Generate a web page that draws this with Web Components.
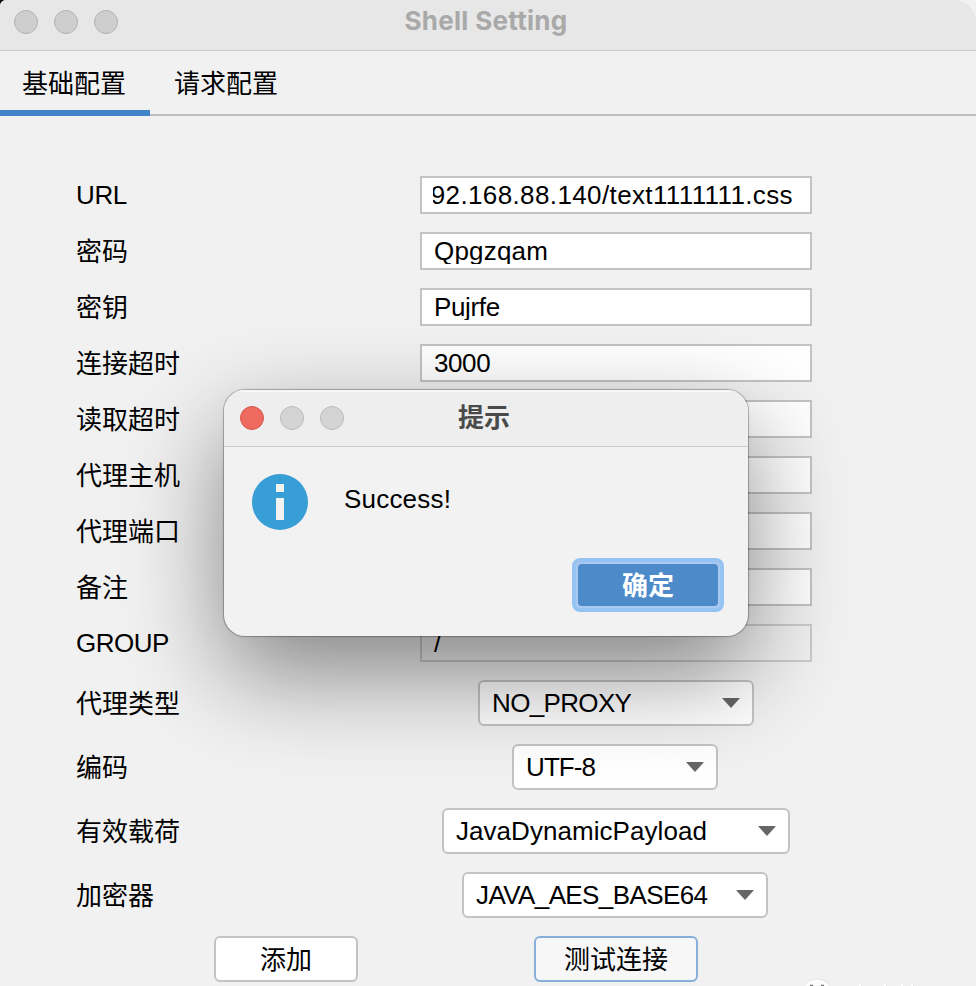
<!DOCTYPE html>
<html lang="zh-CN">
<head>
<meta charset="utf-8">
<title>Shell Setting</title>
<style>
html,body{margin:0;height:986px;overflow:hidden;background:#000}
body{font-family:"Liberation Sans","Noto Sans CJK SC",sans-serif;font-size:26px;color:#000}
</style>
</head>
<body>
<setting-window></setting-window>
<script>
const define=(name,css,html)=>customElements.define(name,class extends HTMLElement{
  constructor(){
    super();
    this.attachShadow({mode:'open'}).innerHTML=`<style>*{box-sizing:border-box}${css}</style>${html}`;
  }
});

define('traffic-lights',`
:host{display:flex;gap:16px}
i{width:24px;height:24px;border-radius:50%;background:var(--light,#cecece);border:1px solid #b3b3b3}
:host([active]) i{--light:#d4d4d4;border-color:#bcbcbc}
:host([active]) i:first-of-type{--light:#ee6a5f;border-color:#d5554b}
`,`<i></i><i></i><i></i>`);

define('tab-item',`
:host{display:block;box-sizing:border-box;height:65px;padding:0 24px 0 22px;line-height:66px;white-space:nowrap;border-bottom:2px solid #bebebe}
:host([selected]){width:150px;border-bottom:6px solid #4083c9}
`,`<slot></slot>`);

define('form-row',`
:host{display:grid;grid-template-columns:344px 392px;align-items:center;height:56px;margin-left:76px}
:host([tall]){height:64px}
.label{letter-spacing:var(--ls,0);line-height:38px;padding-top:2px;white-space:nowrap}
:host([latin]) .label{padding-top:0}
.control{display:flex;justify-content:center}
`,`<div class="label"><slot name="label"></slot></div><div class="control"><slot></slot></div>`);

define('text-field',`
:host{display:block;box-sizing:border-box;width:392px;height:38px;border:2px solid #c3c3c3;background:#fff;padding:4px 12px 4px 11px}
:host([disabled]){background:#f1f1f1;border-color:#cbcbcb}
div{height:26px;overflow:hidden;display:flex;line-height:26px;padding-left:1px;white-space:nowrap;letter-spacing:var(--ls,0)}
:host([scrolled]) div{justify-content:flex-end;padding:0 5px 0 0}
`,`<div><slot></slot></div>`);

define('combo-box',`
:host{display:flex;box-sizing:border-box;height:46px;border:2px solid #c3c3c3;border-radius:6px;background:#fff;padding:0 12px;align-items:center;justify-content:space-between;white-space:nowrap}
span{letter-spacing:var(--ls,0);line-height:42px}
svg{display:block;width:18px;height:10px;flex:none}
`,`<span><slot></slot></span><svg viewBox="0 0 18 10"><path d="M0 0H18L9 10Z" fill="#666"/></svg>`);

define('push-button',`
:host{display:block;box-sizing:border-box;height:46px;border:2px solid #c3c3c3;border-radius:6px;background:#fff;text-align:center;line-height:44px;white-space:nowrap}
:host([focused]){border-color:#87afda;background:#f7f7f7}
:host([primary]){width:152px;height:54px;border:4px solid #97c3f3;border-radius:8px;background:#a9c9f0;padding:2px;line-height:44px;color:#fff;font-weight:700}
:host([primary]) div{background:#4c8aca;border-radius:4px;height:42px}
`,`<div><slot></slot></div>`);

define('message-dialog',`
:host{display:block;box-sizing:border-box;width:524px;height:246px;border-radius:21px;background:#f2f2f2;overflow:hidden;
box-shadow:0 0 0 1px rgba(0,0,0,.2),0 0 3px rgba(0,0,0,.2),0 37px 98px rgba(0,0,0,.46)}
header{height:57px;background:#eee;border-bottom:1px solid #cbcbcb;box-shadow:inset 0 2px #f7f7f7;display:grid;grid-template-columns:104px 1fr 108px;padding-right:0;padding-left:16px;align-items:center;text-align:center;font-weight:700;color:#4a4a4a;line-height:54px}
header{grid-template-columns:104px 1fr 124px}
.body{display:flex;padding:27px 28px 0;gap:36px;height:111px}
svg{width:56px;height:56px;display:block}
.msg{line-height:50px;letter-spacing:.2px}
footer{display:flex;justify-content:flex-end;padding-right:24px}
`,`<header><traffic-lights active></traffic-lights><div><slot name="title"></slot></div></header>
<div class="body"><svg viewBox="0 0 56 56"><circle cx="28" cy="28" r="28" fill="#389fd6"/><path d="M24 10h8v8h-8zM24 24h8v22h-8z" fill="#f2f2f2"/></svg><div class="msg"><slot></slot></div></div>
<footer><slot name="action"></slot></footer>`);

define('corner-mark',`:host{display:block;width:130px;height:8px}svg{display:block}`,
`<svg width="130" height="8" viewBox="0 0 130 8"><circle cx="17" cy="16" r="15" fill="#fdfdfd" stroke="#ddd" stroke-width=".7"/><path d="M10 7.5h3M21 7.5h3" stroke="#777" stroke-width="1.4"/><path d="M59 7h3M84 7h3M101 7h2M111 7h3" stroke="#fff" stroke-width="2"/><path d="M61 7h1M86 7h1M113 7h1" stroke="#ccc" stroke-width="1"/></svg>`);

define('setting-window',`
:host{display:block;position:relative;width:976px;height:986px;background:#f1f1f1;overflow:hidden;border-radius:6px 0 0 0}
.titlebar{height:51px;background:#e7e7e7;border-bottom:1px solid #c8c8c8;display:grid;grid-template-columns:104px 1fr 122px;padding:0 0 6px 14px;align-items:center;text-align:center;font:700 26px/38px Inter,sans-serif;color:#a9a9a9;border-radius:0 22px 0 0}
.titlebar div{letter-spacing:.3px;padding-bottom:2px}
nav{display:flex;height:65px;align-items:flex-start}
nav tab-item:last-of-type{flex:1;padding-left:24px}
.form{padding-top:51px}
.buttons{display:flex;padding:9px 0 0 214px;gap:176px}
message-dialog{position:absolute;left:224px;top:390px}
corner-mark{position:absolute;left:800px;top:978px}
`,`
<div class="titlebar"><traffic-lights></traffic-lights><div>Shell Setting</div></div>
<nav><tab-item selected>基础配置</tab-item><tab-item>请求配置</tab-item></nav>
<div class="form">
<form-row latin style="--ls:-.4px"><span slot="label">URL</span><text-field scrolled style="--ls:.38px">http://192.168.88.140/text1111111.css</text-field></form-row>
<form-row><span slot="label">密码</span><text-field style="--ls:.2px">Qpgzqam</text-field></form-row>
<form-row><span slot="label">密钥</span><text-field style="--ls:-.35px">Pujrfe</text-field></form-row>
<form-row><span slot="label">连接超时</span><text-field style="--ls:-.4px">3000</text-field></form-row>
<form-row><span slot="label">读取超时</span><text-field></text-field></form-row>
<form-row><span slot="label">代理主机</span><text-field></text-field></form-row>
<form-row><span slot="label">代理端口</span><text-field></text-field></form-row>
<form-row><span slot="label">备注</span><text-field></text-field></form-row>
<form-row latin style="--ls:-.5px"><span slot="label">GROUP</span><text-field disabled>/</text-field></form-row>
<div class="combos">
<form-row tall><span slot="label">代理类型</span><combo-box style="width:276px;--ls:-.65px">NO_PROXY</combo-box></form-row>
<form-row tall><span slot="label">编码</span><combo-box style="width:206px;margin-right:2px;--ls:-.9px">UTF-8</combo-box></form-row>
<form-row tall><span slot="label">有效载荷</span><combo-box style="width:348px;--ls:.05px">JavaDynamicPayload</combo-box></form-row>
<form-row tall><span slot="label">加密器</span><combo-box style="width:306px;margin-right:2px;--ls:-.6px">JAVA_AES_BASE64</combo-box></form-row>
</div>
<div class="buttons"><push-button style="width:144px">添加</push-button><push-button focused style="width:164px">测试连接</push-button></div>
</div>
<message-dialog><span slot="title">提示</span>Success!<push-button slot="action" primary>确定</push-button></message-dialog>
<corner-mark></corner-mark>`);
</script>
</body>
</html>
